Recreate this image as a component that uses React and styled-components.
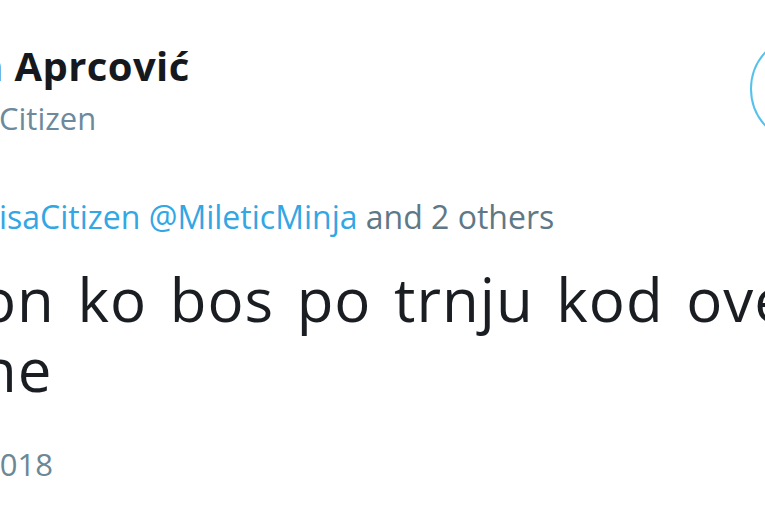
import React from "react";
import styled, { createGlobalStyle } from "styled-components";

const Global = createGlobalStyle`
  html, body { margin: 0; padding: 0; background: #ffffff; }
  body { overflow: hidden; font-family: "Open Sans", "Noto Sans", sans-serif; }
`;

const Tweet = styled.article`
  width: 765px;
  height: 510px;
  overflow: hidden;
  background: #ffffff;
  padding-top: 41px;
  box-sizing: border-box;
`;

const Header = styled.header`
  display: flex;
  align-items: flex-start;
  justify-content: space-between;
`;

const NameBlock = styled.div`
  display: flex;
  flex-direction: column;
`;

const Name = styled.div`
  font-size: 40px;
  font-weight: 700;
  line-height: 50px;
  letter-spacing: 0.4px;
  color: #15191d;
  white-space: nowrap;
  margin-left: ${(p) => p.$shift}px;
`;

const Handle = styled.div`
  font-size: 31px;
  line-height: 54px;
  color: #6c8a9c;
  white-space: nowrap;
  margin-left: ${(p) => p.$shift}px;
`;

const FollowButton = styled.button`
  flex-shrink: 0;
  width: 110px;
  height: 110px;
  margin-top: -7px;
  margin-right: -95px;
  border: 2.5px solid #55c2ec;
  border-radius: 50%;
  background: transparent;
  padding: 0;
`;

const Replying = styled.div`
  margin-top: 47px;
  font-size: 32px;
  line-height: 50px;
  color: #5e7888;
  white-space: nowrap;
  margin-left: ${(p) => p.$shift}px;
`;

const Mention = styled.span`
  color: #33a6e4;
`;

const Text = styled.p`
  margin: 22px 0 0 ${(p) => p.$shift}px;
  font-size: 60px;
  line-height: 70px;
  letter-spacing: 1px;
  word-spacing: 6px;
  color: #1a1e22;
  white-space: nowrap;
`;

const DateLine = styled.div`
  margin-top: 35px;
  font-size: 31px;
  line-height: 50px;
  color: #6c8796;
  white-space: nowrap;
  margin-left: ${(p) => p.$shift}px;
`;

export default function App() {
  return (
    <>
      <Global />
      <Tweet>
        <Header>
          <NameBlock>
            <Name $shift={-23}>n Aprcović</Name>
            <Handle $shift={-1}>Citizen</Handle>
          </NameBlock>
          <FollowButton aria-label="Follow" />
        </Header>
        <Replying $shift={-1}>
          <Mention>isaCitizen</Mention> <Mention>@MileticMinja</Mention> and 2 others
        </Replying>
        <Text $shift={-20}>
          on ko bos po trnju kod ove
          <br />
          ne
        </Text>
        <DateLine $shift={-18}>2018</DateLine>
      </Tweet>
    </>
  );
}
